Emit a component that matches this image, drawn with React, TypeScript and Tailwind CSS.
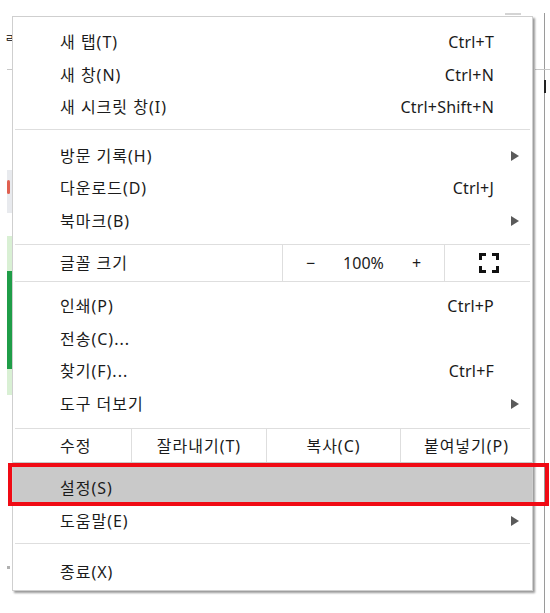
import React from 'react';

type Item = { label: string; shortcut?: string; submenu?: boolean };

const group1: Item[] = [
    { label: '새 탭(T)', shortcut: 'Ctrl+T' },
    { label: '새 창(N)', shortcut: 'Ctrl+N' },
    { label: '새 시크릿 창(I)', shortcut: 'Ctrl+Shift+N' },
];

const group2: Item[] = [
    { label: '방문 기록(H)', submenu: true },
    { label: '다운로드(D)', shortcut: 'Ctrl+J' },
    { label: '북마크(B)', submenu: true },
];

const group4: Item[] = [
    { label: '인쇄(P)', shortcut: 'Ctrl+P' },
    { label: '전송(C)...' },
    { label: '찾기(F)...', shortcut: 'Ctrl+F' },
    { label: '도구 더보기', submenu: true },
];

function Arrow() {
    return (
        <svg width="8" height="10" viewBox="0 0 8 10" className="block">
            <path d="M0 0 L8 5 L0 10 Z" fill="#5a5a5a" />
        </svg>
    );
}

function Row({ item }: { item: Item }) {
    return (
        <div className="h-[32.5px] flex items-center pl-[47px]">
            <span className="flex-1 tracking-[1px]">{item.label}</span>
            {item.shortcut && <span className="tracking-[0.2px]">{item.shortcut}</span>}
            <span className="w-[38px] flex items-center pl-[17px]">
                {item.submenu && <Arrow />}
            </span>
        </div>
    );
}

function Separator() {
    return <div className="h-px bg-[#dedede] mx-[2px]" />;
}

function FullscreenIcon() {
    return (
        <svg width="20" height="20" viewBox="0 0 20 20" fill="none" stroke="#111" strokeWidth="3">
            <path d="M1.5 7 V1.5 H7" />
            <path d="M13 1.5 H18.5 V7" />
            <path d="M18.5 13 V18.5 H13" />
            <path d="M7 18.5 H1.5 V13" />
        </svg>
    );
}

export default function App() {
    return (
        <div
            className="relative w-[550px] h-[613px] bg-white overflow-hidden text-[16px] leading-[22px] text-[#1b1b1b]"
            style={{ fontFamily: '"Noto Sans", "Noto Sans CJK KR", sans-serif' }}
        >
            {/* page behind the menu */}
            <span className="absolute left-[5px] top-[32px] text-[10px] leading-[12px] text-black">ㄹ</span>
            <div className="absolute left-[7px] top-[69px] w-[6px] h-px bg-[#c8c8c8]" />
            <div className="absolute left-[7px] top-[170px] w-[5px] h-[43px] bg-[#e8eaee]" />
            <div className="absolute left-[7px] top-[180px] w-[3px] h-[14px] bg-[#e06050] rounded-sm" />
            <div className="absolute left-[7px] top-[236px] w-[5px] h-[35px] bg-[#d9f0d4]" />
            <div className="absolute left-[7px] top-[271px] w-[5px] h-[98px] bg-[#1f9d48]" />
            <div className="absolute left-[7px] top-[369px] w-[5px] h-[26px] bg-[#d9f0d4]" />
            <div className="absolute left-[7px] top-[566px] w-[3px] h-[3px] bg-[#b0b0b0]" />
            <div className="absolute left-[544px] top-[13px] w-px h-[600px] bg-[#9a9a9a]" />
            <div className="absolute left-[535px] top-[69px] w-[15px] h-px bg-[#c8c8c8]" />
            <div className="absolute left-[544px] top-[80px] w-[2px] h-[13px] bg-[#222]" />
            <div className="absolute left-[505px] top-[13px] w-[16px] h-[2px] bg-[#d4d4d4]" />

            {/* the menu */}
            <div className="absolute left-[12px] top-[16px] w-[521px] bg-white border border-[#cfcfcf] shadow-[2px_2px_2px_rgba(0,0,0,0.4)]">
                <div className="pt-[9px] pb-[5px]">
                    {group1.map(item => <Row key={item.label} item={item} />)}
                </div>
                <Separator />
                <div className="pt-[10px] pb-[7px]">
                    {group2.map(item => <Row key={item.label} item={item} />)}
                </div>
                <Separator />
                <div className="h-[36px] flex">
                    <div className="w-[269px] flex items-center pl-[47px] tracking-[1px]">글꼴 크기</div>
                    <div className="w-[162px] border-l border-[#dedede] grid grid-cols-3 items-center text-center px-[1px]">
                        <span>−</span>
                        <span>100%</span>
                        <span>+</span>
                    </div>
                    <div className="flex-1 border-l border-[#dedede] flex items-center justify-center">
                        <FullscreenIcon />
                    </div>
                </div>
                <Separator />
                <div className="pt-[8px] pb-[8px]">
                    {group4.map(item => <Row key={item.label} item={item} />)}
                </div>
                <Separator />
                <div className="h-[33px] flex tracking-[1px]">
                    <div className="w-[118px] flex items-center pl-[47px]">수정</div>
                    <div className="w-[135px] border-l border-[#dedede] flex items-center justify-center">잘라내기(T)</div>
                    <div className="w-[134px] border-l border-[#dedede] flex items-center justify-center">복사(C)</div>
                    <div className="flex-1 border-l border-[#dedede] flex items-center justify-center">붙여넣기(P)</div>
                </div>
                <div className="h-[43px] pt-[8px] flex items-center pl-[47px] bg-[#c9c9c9] tracking-[1px]">설정(S)</div>
                <div className="pb-[5px]">
                    <Row item={{ label: '도움말(E)', submenu: true }} />
                </div>
                <Separator />
                <div className="pt-[12px] pb-[2px]">
                    <Row item={{ label: '종료(X)' }} />
                </div>
            </div>

            {/* annotation box */}
            <div className="absolute left-[8px] top-[463px] w-[541px] h-[43px] border-[4px] border-[#f00a14]" />
        </div>
    );
}
